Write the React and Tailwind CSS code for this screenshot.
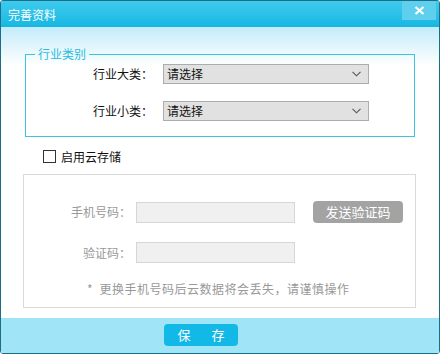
export default function App() {
  const Select = () => (
    <div className="ml-[10px] w-[206px] h-[20px] bg-[#e1e1e1] border border-[#acacac] flex items-center pl-[3px] pr-[7px] text-[12px] text-[#111]">
      <span>请选择</span>
      <svg className="ml-auto" width="9" height="6" viewBox="0 0 9 6">
        <path d="M0.5 0.8 L4.5 4.8 L8.5 0.8" fill="none" stroke="#555" strokeWidth="1.1" />
      </svg>
    </div>
  );
  return (
    <div className="w-[440px] h-[354px] flex flex-col border border-[#1d6d86] rounded-[3px] overflow-hidden bg-white font-['Noto_Sans_CJK_SC','Liberation_Sans',sans-serif] text-[12px] leading-[16px]">
      <div className="h-[26px] shrink-0 flex items-start bg-linear-to-b from-[#3dcbee] to-[#14b7e2]">
        <span className="ml-[7px] mt-[6px] text-[12px] leading-[16px] text-white">完善资料</span>
        <div className="ml-auto mr-[3px] w-[34px] h-[19px] bg-[#5fcfee] flex items-center justify-center">
          <svg width="11" height="9" viewBox="0 0 11 9">
            <path d="M1.5 1 L9.5 8 M9.5 1 L1.5 8" stroke="#ffffff" strokeWidth="2.2" />
          </svg>
        </div>
      </div>
      <div className="flex-1 flex flex-col bg-linear-to-b from-[#c3ecfa] to-white to-[12%]">
        <fieldset className="mt-[20px] mx-[24px] border border-[#3cc3df] pt-[3px] pb-[15px]">
          <legend className="ml-[9px] px-[3px] text-[#2abbdf] leading-[14px]">行业类别</legend>
          <div className="flex items-center pl-[67px] h-[20px] text-[#111]">
            <span>行业大类：</span>
            <Select />
          </div>
          <div className="flex items-center pl-[67px] h-[20px] mt-[17px] text-[#111]">
            <span>行业小类：</span>
            <Select />
          </div>
        </fieldset>
        <div className="mt-[13px] ml-[42px] h-[13px] flex items-center text-[#111]">
          <div className="w-[13px] h-[13px] border border-[#333] bg-white" />
          <span className="ml-[5px]">启用云存储</span>
        </div>
        <div className="mt-[11px] ml-[22px] mr-[23px] border border-[#dadada] pt-[26px] pb-[10px] text-[#999]">
          <div className="flex items-center h-[22px]">
            <span className="w-[107px] text-right">手机号码：</span>
            <div className="ml-[5px] w-[159px] h-[21px] bg-[#f0f0f0] border border-[#d6d6d6]" />
            <div className="ml-[18px] w-[90px] h-[22px] rounded-[4px] bg-[#a3a3a3] text-white text-[13px] flex items-center justify-center">发送验证码</div>
          </div>
          <div className="flex items-center h-[21px] mt-[19px]">
            <span className="w-[107px] text-right">验证码：</span>
            <div className="ml-[5px] w-[159px] h-[21px] bg-[#f0f0f0] border border-[#d6d6d6]" />
          </div>
          <div className="mt-[18px] pl-[63px] leading-[16px] tracking-[0.5px] whitespace-pre">{"*  更换手机号码后云数据将会丢失，请谨慎操作"}</div>
        </div>
        <div className="mt-auto h-[35px] bg-[#9fe4f7] flex justify-center items-start pr-[38px]">
          <div className="mt-[6px] w-[74px] h-[22px] rounded-[4px] bg-[#13b9e6] text-white text-[13px] flex items-center justify-center gap-[21px]">
            <span>保</span>
            <span>存</span>
          </div>
        </div>
      </div>
    </div>
  );
}
